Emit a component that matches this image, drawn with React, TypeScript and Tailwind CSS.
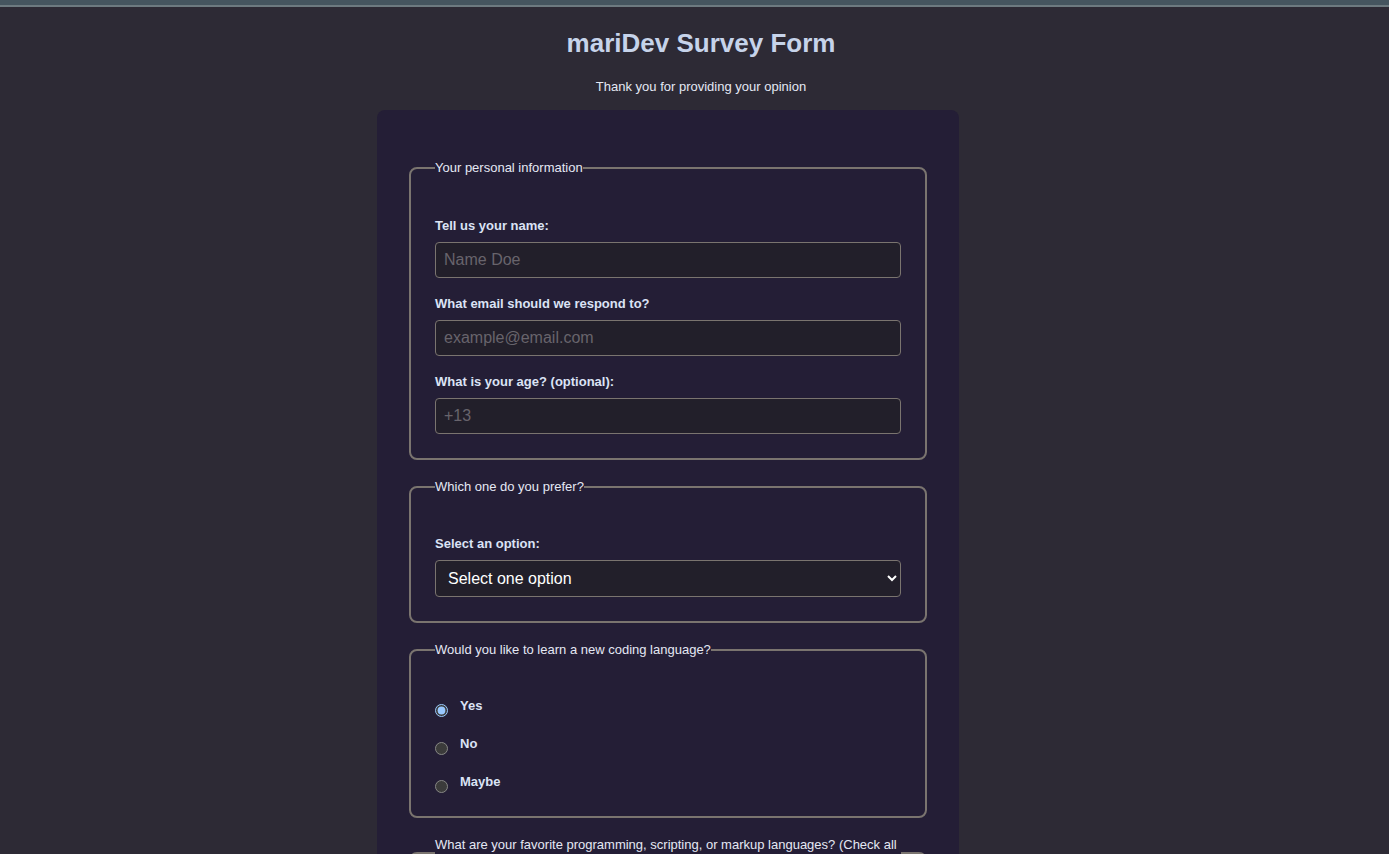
import React, { useState } from 'react';

const fieldsetClass =
    'border-2 border-[#7a746f] rounded-lg px-6 pb-6 [&:not(:first-child)]:mt-[19px]';
const legendClass = 'text-[13px] leading-4 text-[#e4e8f4] px-0';
const labelClass = 'block text-[13px] leading-4 font-bold text-[#dbe3f5] mb-2';
const inputClass =
    'block w-full h-9 px-2 text-[16px] bg-[#221f2a] border border-[#7a746f] rounded text-white placeholder:text-[#68646c] outline-none';

export default function App() {
    const [learn, setLearn] = useState('yes');
    const [option, setOption] = useState('');

    return (
        <div className="min-h-screen bg-[#2d2a35] [color-scheme:dark] font-['Liberation_Sans',Arial,sans-serif]">
            <div className="h-[5px] bg-[#45555f]" />
            <div className="h-[2px] bg-[#6d7a80]" />

            <header className="pl-[13px] text-center">
                <h1 className="pt-[21px] text-[26px] leading-[30px] font-bold text-[#c6d3ea]">
                    mariDev Survey Form
                </h1>
                <p className="mt-[21px] text-[13px] leading-[15px] text-[#e4e8f4]">
                    Thank you for providing your opinion
                </p>
            </header>

            <form
                className="ml-[377px] mt-4 w-[582px] rounded-lg bg-[#241e36] px-8 pt-[50px] pb-10"
                onSubmit={e => e.preventDefault()}
            >
                <fieldset className={fieldsetClass}>
                    <legend className={legendClass}>
                        Your personal information
                    </legend>
                    <div className="pt-[42px]">
                        <label htmlFor="name" className={labelClass}>
                            Tell us your name:
                        </label>
                        <input
                            id="name"
                            type="text"
                            placeholder="Name Doe"
                            className={inputClass}
                        />
                        <label
                            htmlFor="email"
                            className={labelClass + ' mt-[18px]'}
                        >
                            What email should we respond to?
                        </label>
                        <input
                            id="email"
                            type="email"
                            placeholder="example@email.com"
                            className={inputClass}
                        />
                        <label
                            htmlFor="age"
                            className={labelClass + ' mt-[18px]'}
                        >
                            What is your age? (optional):
                        </label>
                        <input
                            id="age"
                            type="number"
                            placeholder="+13"
                            className={inputClass}
                        />
                    </div>
                </fieldset>

                <fieldset className={fieldsetClass}>
                    <legend className={legendClass}>
                        Which one do you prefer?
                    </legend>
                    <div className="pt-[41px]">
                        <label htmlFor="dropdown" className={labelClass}>
                            Select an option:
                        </label>
                        <select
                            id="dropdown"
                            value={option}
                            onChange={e => setOption(e.target.value)}
                            className="block w-full h-[37px] pl-2 pr-4 text-[16px] bg-[#221f2a] border border-[#7a746f] rounded text-white outline-none"
                        >
                            <option value="">Select one option</option>
                            <option value="frontend">Frontend</option>
                            <option value="backend">Backend</option>
                            <option value="fullstack">Fullstack</option>
                        </select>
                    </div>
                </fieldset>

                <fieldset className={fieldsetClass + ' !pb-[22px]'}>
                    <legend className={legendClass}>
                        Would you like to learn a new coding language?
                    </legend>
                    <div className="pt-10 flex flex-col gap-[18px]">
                        {[
                            { value: 'yes', label: 'Yes' },
                            { value: 'no', label: 'No' },
                            { value: 'maybe', label: 'Maybe' },
                        ].map(item => (
                            <label
                                key={item.value}
                                className="flex items-start h-5"
                            >
                                <input
                                    type="radio"
                                    name="learn"
                                    value={item.value}
                                    checked={learn === item.value}
                                    onChange={() => setLearn(item.value)}
                                    className="mt-[6px] w-[13px] h-[13px]"
                                />
                                <span className="ml-3 text-[13px] leading-4 font-bold text-[#dbe3f5]">
                                    {item.label}
                                </span>
                            </label>
                        ))}
                    </div>
                </fieldset>

                <fieldset className={fieldsetClass}>
                    <legend className={legendClass}>
                        What are your favorite programming, scripting, or
                        markup languages? (Check all that apply)
                    </legend>
                    <div className="pt-10 flex flex-col gap-3">
                        {['HTML', 'CSS', 'JavaScript', 'Python', 'Java'].map(
                            lang => (
                                <label key={lang} className="flex items-center gap-3">
                                    <input type="checkbox" value={lang} />
                                    <span className="text-[13px] font-bold text-[#dbe3f5]">
                                        {lang}
                                    </span>
                                </label>
                            )
                        )}
                    </div>
                </fieldset>
            </form>
        </div>
    );
}
